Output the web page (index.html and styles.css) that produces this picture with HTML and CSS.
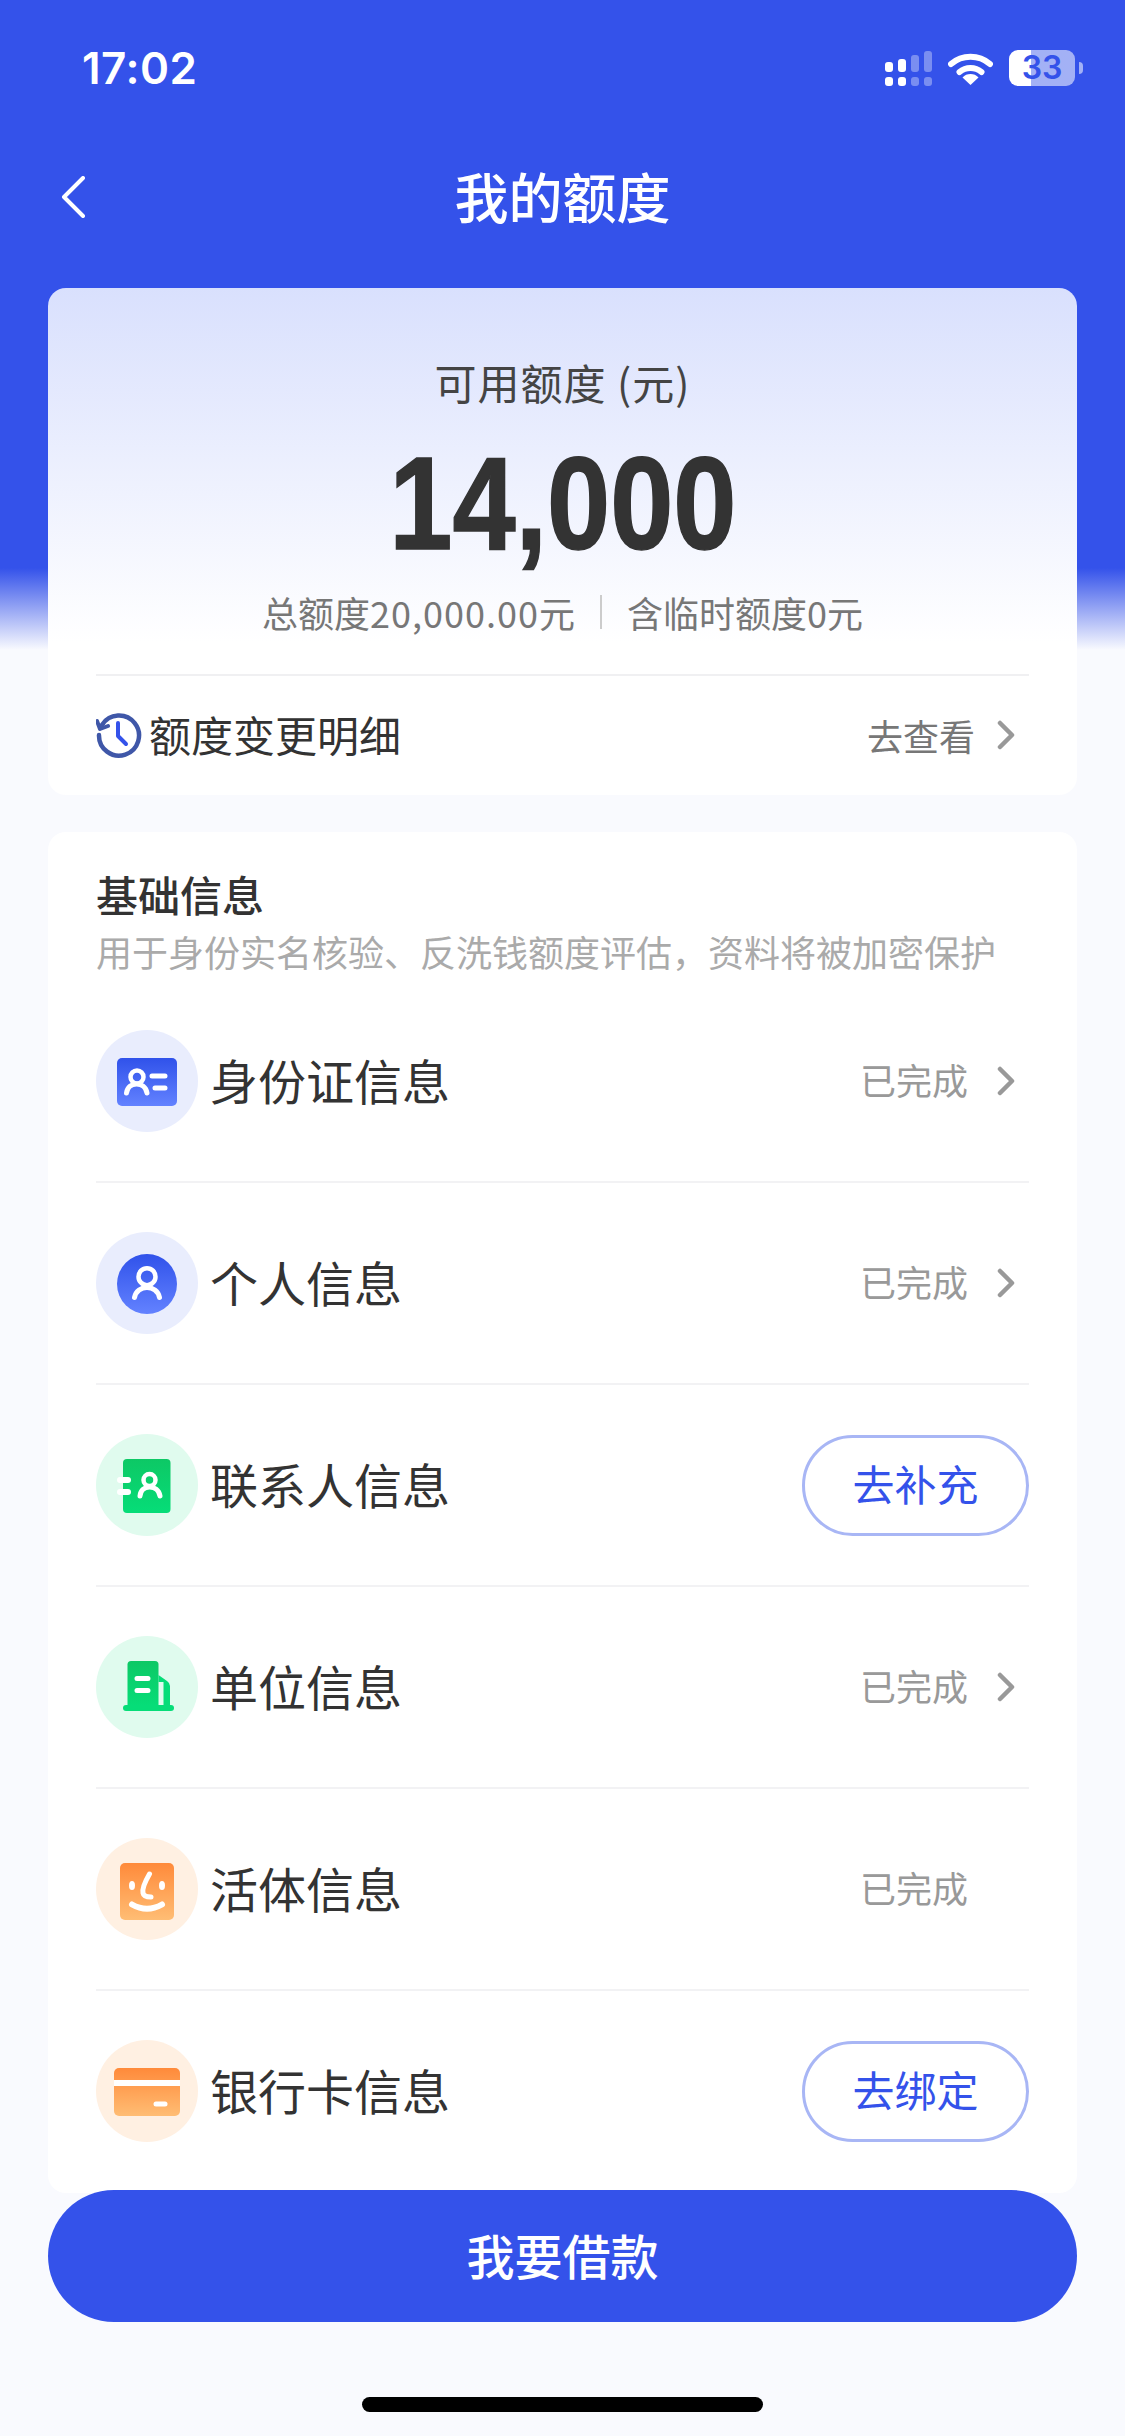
FILE: index.html
```html
<!DOCTYPE html>
<html lang="zh-CN">
<head>
<meta charset="utf-8">
<title>我的额度</title>
<link rel="stylesheet" href="styles.css">
</head>
<body>
<div class="screen">
  <header class="status">
    <span class="time">17:02</span>
    <div class="status-icons">
      <svg class="signal" width="49" height="36" viewBox="0 0 49 36">
        <g fill="#fff">
          <rect x="1" y="12" width="8" height="10" rx="3"/><rect x="14" y="9" width="8" height="13" rx="3"/>
          <rect x="1" y="27" width="8" height="9" rx="3"/><rect x="14" y="27" width="8" height="9" rx="3"/>
        </g>
        <g fill="#fff" fill-opacity=".35">
          <rect x="27" y="5" width="8" height="17" rx="3"/><rect x="40" y="1" width="8" height="21" rx="3"/>
          <rect x="27" y="27" width="8" height="9" rx="3"/><rect x="40" y="27" width="8" height="9" rx="3"/>
        </g>
      </svg>
      <svg class="wifi" width="45" height="33" viewBox="0 0 45 33">
        <g fill="none" stroke="#fff" stroke-width="6" stroke-linecap="round"><path d="M3 12 A30 30 0 0 1 42 12"/><path d="M11.500 20 A17 17 0 0 1 33.500 20"/></g>
        <path d="M22.500 33 L14.500 25.500 A11 11 0 0 1 30.500 25.500 Z" fill="#fff"/>
      </svg>
      <div class="battery">33</div>
    </div>
  </header>

  <nav class="nav">
    <svg class="back" width="26" height="42" viewBox="0 0 26 42"><path d="M23 2 L4 21 L23 40" fill="none" stroke="#fff" stroke-width="4" stroke-linecap="round" stroke-linejoin="round"/></svg>
    <h1 class="nav-title">我的额度</h1>
  </nav>

  <section class="card quota">
    <div class="quota-label">可用额度 (元)</div>
    <div class="quota-value">14,000</div>
    <div class="quota-sub"><span>总额度<span class="num">20,000.00</span>元</span><i class="vline"></i><span>含临时额度0元</span></div>
    <div class="quota-row">
      <div class="quota-row-left">
        <svg width="46" height="46" viewBox="0 0 46 46">
          <path d="M6 13 A20 20 0 1 1 3 23" fill="none" stroke="#3f57a8" stroke-width="4.500" stroke-linecap="round"/>
          <path d="M1 9 L4 17 L12 14" fill="none" stroke="#3f57a8" stroke-width="4" stroke-linecap="round" stroke-linejoin="round"/>
          <path d="M22 11 V24 L30 32" fill="none" stroke="#3452ea" stroke-width="4" stroke-linecap="round" stroke-linejoin="round"/>
        </svg>
        <span class="quota-row-name">额度变更明细</span>
      </div>
      <div class="row-right">
        <span class="quota-link">去查看</span>
        <svg class="chev" width="18" height="30" viewBox="0 0 18 30"><path d="M3 3 L15 15 L3 27" fill="none" stroke="#999" stroke-width="4.500" stroke-linecap="round" stroke-linejoin="round"/></svg>
      </div>
    </div>
  </section>

  <section class="card info">
    <h2 class="info-title">基础信息</h2>
    <p class="info-desc">用于身份实名核验、反洗钱额度评估，资料将被加密保护</p>

    <div class="row">
      <svg class="ico" width="102" height="102" viewBox="0 0 102 102">
        <defs>
          <linearGradient id="b" x1="0" y1="0" x2="0" y2="1"><stop offset="0" stop-color="#3052ea"/><stop offset="1" stop-color="#6382ff"/></linearGradient>
          <linearGradient id="g" x1="0" y1="0" x2="0" y2="1"><stop offset="0" stop-color="#0dc865"/><stop offset="1" stop-color="#06dd78"/></linearGradient>
          <linearGradient id="o" x1="0" y1="0" x2="0" y2="1"><stop offset="0" stop-color="#ff8a3a"/><stop offset="1" stop-color="#ffbd74"/></linearGradient>
        </defs>
        <circle cx="51" cy="51" r="51" fill="#e9edfd"/>
        <rect x="21" y="28" width="60" height="48" rx="5" fill="url(#b)"/>
        <circle cx="41" cy="47" r="6.500" fill="none" stroke="#fff" stroke-width="4.500"/>
        <path d="M30.500 63 C32 51 49 51 51 63" fill="none" stroke="#fff" stroke-width="5" stroke-linecap="round"/>
        <path d="M56 46 H69 M59 58 H69" stroke="#fff" stroke-width="5" stroke-linecap="round"/>
      </svg>
      <span class="row-name">身份证信息</span>
      <div class="row-right"><span class="done">已完成</span><svg class="chev" width="18" height="30" viewBox="0 0 18 30"><path d="M3 3 L15 15 L3 27" fill="none" stroke="#999" stroke-width="4.500" stroke-linecap="round" stroke-linejoin="round"/></svg></div>
    </div>

    <div class="row">
      <svg class="ico" width="102" height="102" viewBox="0 0 102 102">
        <circle cx="51" cy="51" r="51" fill="#e9edfd"/>
        <circle cx="51" cy="52" r="30" fill="url(#b)"/>
        <circle cx="51" cy="44.700" r="8.500" fill="none" stroke="#fff" stroke-width="4.500"/>
        <path d="M38.500 65.500 C41 52 61 52 63.500 65.500" fill="none" stroke="#fff" stroke-width="5" stroke-linecap="round"/>
      </svg>
      <span class="row-name">个人信息</span>
      <div class="row-right"><span class="done">已完成</span><svg class="chev" width="18" height="30" viewBox="0 0 18 30"><path d="M3 3 L15 15 L3 27" fill="none" stroke="#999" stroke-width="4.500" stroke-linecap="round" stroke-linejoin="round"/></svg></div>
    </div>

    <div class="row">
      <svg class="ico" width="102" height="102" viewBox="0 0 102 102">
        <circle cx="51" cy="51" r="51" fill="#e0fbee"/>
        <rect x="27" y="25" width="47.500" height="54" rx="4" fill="url(#g)"/>
        <path d="M24 46 H32 M24 58 H32" stroke="#fff" stroke-width="6" stroke-linecap="round"/>
        <circle cx="53.500" cy="46" r="6" fill="none" stroke="#fff" stroke-width="4.500"/>
        <path d="M44 62 C45 50 62 50 64 62" fill="none" stroke="#fff" stroke-width="5" stroke-linecap="round"/>
      </svg>
      <span class="row-name">联系人信息</span>
      <div class="row-right"><button class="pill">去补充</button></div>
    </div>

    <div class="row">
      <svg class="ico" width="102" height="102" viewBox="0 0 102 102">
        <circle cx="51" cy="51" r="51" fill="#e0fbee"/>
        <path d="M35 25 H59 A3.500 3.500 0 0 1 62.500 28.500 V70 H31.500 V28.500 A3.500 3.500 0 0 1 35 25 Z" fill="url(#g)"/>
        <path d="M62.500 39 L71 45 Q74 47 74 50 V70 H67.500 V46 H62.500 Z" fill="#06dd78"/>
        <rect x="27" y="69" width="51" height="6" rx="3" fill="#06dd78"/>
        <path d="M41 42.500 H52 M41 54.500 H52" stroke="#fff" stroke-width="5" stroke-linecap="round"/>
      </svg>
      <span class="row-name">单位信息</span>
      <div class="row-right"><span class="done">已完成</span><svg class="chev" width="18" height="30" viewBox="0 0 18 30"><path d="M3 3 L15 15 L3 27" fill="none" stroke="#999" stroke-width="4.500" stroke-linecap="round" stroke-linejoin="round"/></svg></div>
    </div>

    <div class="row">
      <svg class="ico" width="102" height="102" viewBox="0 0 102 102">
        <circle cx="51" cy="51" r="51" fill="#fff0e2"/>
        <rect x="24" y="25" width="54" height="57" rx="5" fill="url(#o)"/>
        <ellipse cx="36" cy="47.500" rx="3" ry="4.500" fill="#fff"/>
        <ellipse cx="66" cy="47.500" rx="3" ry="4.500" fill="#fff"/>
        <path d="M53.500 36 C50 42 46 50 47 55 C47.500 58 51 59 55 59" fill="none" stroke="#fff" stroke-width="5" stroke-linecap="round"/>
        <path d="M36 66.500 Q51 75 66 66.500" fill="none" stroke="#fff" stroke-width="6" stroke-linecap="round"/>
      </svg>
      <span class="row-name">活体信息</span>
      <div class="row-right"><span class="done">已完成</span><span class="chev-gap"></span></div>
    </div>

    <div class="row last">
      <svg class="ico" width="102" height="102" viewBox="0 0 102 102">
        <circle cx="51" cy="51" r="51" fill="#fff0e2"/>
        <rect x="18" y="28" width="66" height="48" rx="5" fill="url(#o)"/>
        <rect x="18" y="40" width="66" height="6" fill="#fff"/>
        <path d="M60 64 H69" stroke="#fff" stroke-width="5" stroke-linecap="round"/>
      </svg>
      <span class="row-name">银行卡信息</span>
      <div class="row-right"><button class="pill">去绑定</button></div>
    </div>
  </section>

  <button class="cta">我要借款</button>
  <div class="home-bar"></div>
</div>
</body>
</html>
```

FILE: styles.css
```css
* { box-sizing: border-box; }
html, body { margin: 0; padding: 0; }
body {
  width: 1125px;
  height: 2436px;
  overflow: hidden;
  font-family: "Noto Sans CJK SC", "Liberation Sans", sans-serif;
  color: #333;
}
.screen {
  width: 1125px;
  height: 2436px;
  display: flex;
  flex-direction: column;
  background: linear-gradient(180deg, #3452ea 0, #3452ea 568px, #f9fafe 650px, #f9fafe 100%);
}
.status {
  height: 136px;
  flex: none;
  display: flex;
  align-items: center;
  justify-content: space-between;
  padding: 0 50px 0 82px;
}
.time {
  font-family: Inter, "Liberation Sans", sans-serif;
  font-size: 44px;
  font-weight: 600;
  color: #fff;
  letter-spacing: .5px;
}
.status-icons { display: flex; align-items: center; }
.signal { margin-right: 15px; }
.wifi { margin-right: 16px; }
.battery {
  position: relative;
  width: 66px;
  height: 36px;
  border-radius: 9px;
  background: linear-gradient(90deg, #fff 33%, rgba(255,255,255,.55) 33%);
  color: #3452ea;
  font-family: Inter, "Liberation Sans", sans-serif;
  font-size: 32px;
  font-weight: 600;
  line-height: 36px;
  text-align: center;
}
.battery::after {
  content: "";
  position: absolute;
  right: -8px;
  top: 12px;
  width: 4px;
  height: 12px;
  border-radius: 0 6px 6px 0;
  background: rgba(255,255,255,.55);
}
.nav {
  height: 122px;
  flex: none;
  position: relative;
  display: flex;
  align-items: center;
  justify-content: center;
  margin-bottom: 30px;
  padding-bottom: 2px;
}
.back { position: absolute; left: 60px; top: 40px; }
.nav-title {
  margin: 0;
  font-size: 54px;
  font-weight: 500;
  color: #fff;
  line-height: 70px;
}
.card {
  margin: 0 48px;
  background: #fff;
  border-radius: 18px;
  flex: none;
}
.quota {
  height: 507px;
  padding-top: 69px;
  background: linear-gradient(180deg, #d9e0fd 0, #fff 70%);
  display: flex;
  flex-direction: column;
  align-items: center;
  margin-bottom: 37px;
}
.quota-label { font-size: 42px; line-height: 50px; color: #444; letter-spacing: 1px; }
.quota-value {
  font-family: "Liberation Sans", sans-serif;
  font-weight: 700;
  font-size: 132px;
  line-height: 132px;
  margin-top: 31px;
  color: #333;
  transform: scaleX(.86);
  -webkit-text-stroke: 1.5px #333;
}
.quota-sub {
  display: flex;
  align-items: center;
  font-size: 36px;
  line-height: 50px;
  color: #777;
  margin-top: 17px;
}
.num { letter-spacing: 1px; }
.vline {
  width: 2px;
  height: 34px;
  background: #ccc;
  margin: 0 25px;
}
.quota-row {
  width: 933px;
  height: 120px;
  margin-top: 37px;
  border-top: 2px solid #f0f0f2;
  display: flex;
  align-items: center;
  justify-content: space-between;
}
.quota-row-left { display: flex; align-items: center; font-size: 42px; color: #333; gap: 7px; }
.quota-row-name { margin-bottom: 3px; }
.row-right { display: flex; align-items: center; }
.quota-link { font-size: 36px; color: #777; }
.chev { margin: 0 14px 0 29px; }
.chev-gap { width: 61px; }
.quota-row .chev { margin: 0 14px 0 22px; }
.info { height: 1361px; padding: 33px 48px 0; }
.info-title { margin: 0; font-size: 42px; font-weight: 500; line-height: 58px; color: #333; }
.info-desc { margin: 3px 0 0; font-size: 36px; line-height: 50px; color: #aaa; white-space: nowrap; height: 55px; }
.row {
  height: 202px;
  display: flex;
  align-items: center;
  border-bottom: 2px solid #f2f2f4;
}
.row.last { border-bottom-color: transparent; }
.ico { flex: none; }
.row-name { margin: 0 0 5px 12px; font-size: 48px; color: #333; flex: 1; }
.done { font-size: 36px; color: #999; margin-bottom: 5px; }
.pill {
  width: 227px;
  height: 101px;
  border: 3px solid #a8b6f5;
  border-radius: 51px;
  background: #fff;
  color: #3452ea;
  font-family: inherit;
  font-size: 42px;
  padding: 0 0 5px;
}
.cta {
  flex: none;
  width: 1029px;
  height: 132px;
  margin: -3px 48px 0;
  border: 0;
  border-radius: 66px;
  background: #3452ea;
  color: #fff;
  font-family: inherit;
  font-size: 48px;
  font-weight: 500;
  padding: 0 0 5px;
  position: relative;
}
.home-bar {
  flex: none;
  width: 401px;
  height: 15px;
  margin: 75px auto 0;
  border-radius: 8px;
  background: #000;
}
```
